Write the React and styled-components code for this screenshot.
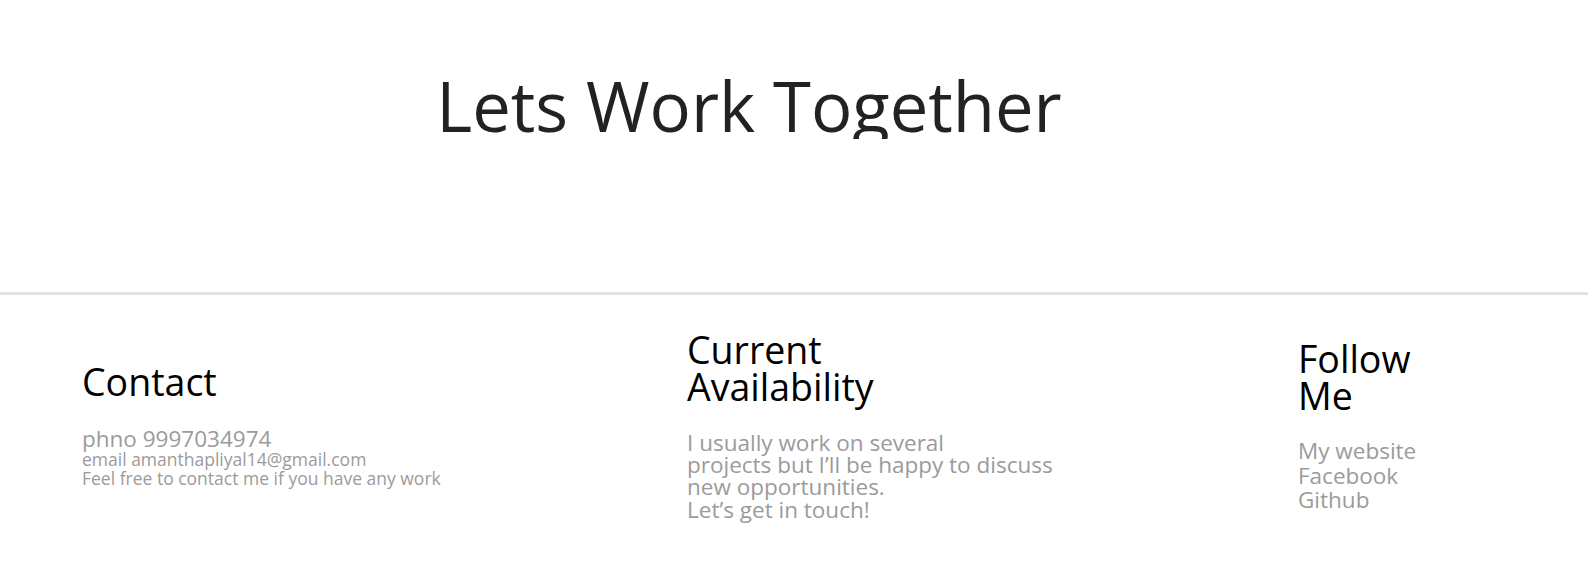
import React from "react";
import styled, { createGlobalStyle } from "styled-components";

const GlobalStyle = createGlobalStyle`
  html, body {
    margin: 0;
    padding: 0;
    background: #ffffff;
    font-family: "Open Sans", "Noto Sans", sans-serif;
  }
`;

const Hero = styled.header`
  box-sizing: border-box;
  height: 295px;
  padding: 71px 90px 0 0;
  border-bottom: 3px solid #e3e3e3;
  display: flex;
  justify-content: center;
`;

const Title = styled.h1`
  margin: 0;
  height: 68px;
  overflow: hidden;
  font-size: 68.8px;
  line-height: 68px;
  font-weight: 400;
  color: #222222;
`;

const Footer = styled.footer`
  box-sizing: border-box;
  height: 262px;
  padding-left: 82px;
  display: grid;
  grid-template-columns: 605px 611px 1fr;
  align-items: center;
`;

const Column = styled.section`
  display: flex;
  flex-direction: column;
`;

const Heading = styled.h2`
  margin: 0 0 ${(p) => p.$gap || 24}px;
  font-size: 37.5px;
  line-height: 37px;
  font-weight: 400;
  color: #000000;
`;

const Text = styled.p`
  margin: 0;
  font-size: ${(p) => (p.$small ? 17.5 : 22.5)}px;
  line-height: ${(p) => p.$lh || 20}px;
  color: #9b9b9b;
`;

const LinkItem = styled.a`
  display: block;
  font-size: 22.5px;
  line-height: 24.3px;
  color: #9b9b9b;
  text-decoration: none;
`;

export default function App() {
  return (
    <>
      <GlobalStyle />
      <Hero>
        <Title>Lets Work Together</Title>
      </Hero>
      <Footer>
        <Column>
          <Heading $gap={26.4}>Contact</Heading>
          <Text $lh={23.3}>phno 9997034974</Text>
          <Text $small $lh={19.3}>email amanthapliyal14@gmail.com</Text>
          <Text $small $lh={19.3}>Feel free to contact me if you have any work</Text>
        </Column>
        <Column>
          <Heading $gap={26.6}>
            Current
            <br />
            Availability
          </Heading>
          <Text $lh={22.27}>
            I usually work on several
            <br />
            projects but I’ll be happy to discuss
            <br />
            new opportunities.
            <br />
            Let’s get in touch!
          </Text>
        </Column>
        <Column>
          <Heading $gap={25.5}>
            Follow
            <br />
            Me
          </Heading>
          <LinkItem href="#">My website</LinkItem>
          <LinkItem href="#">Facebook</LinkItem>
          <LinkItem href="#">Github</LinkItem>
        </Column>
      </Footer>
    </>
  );
}
